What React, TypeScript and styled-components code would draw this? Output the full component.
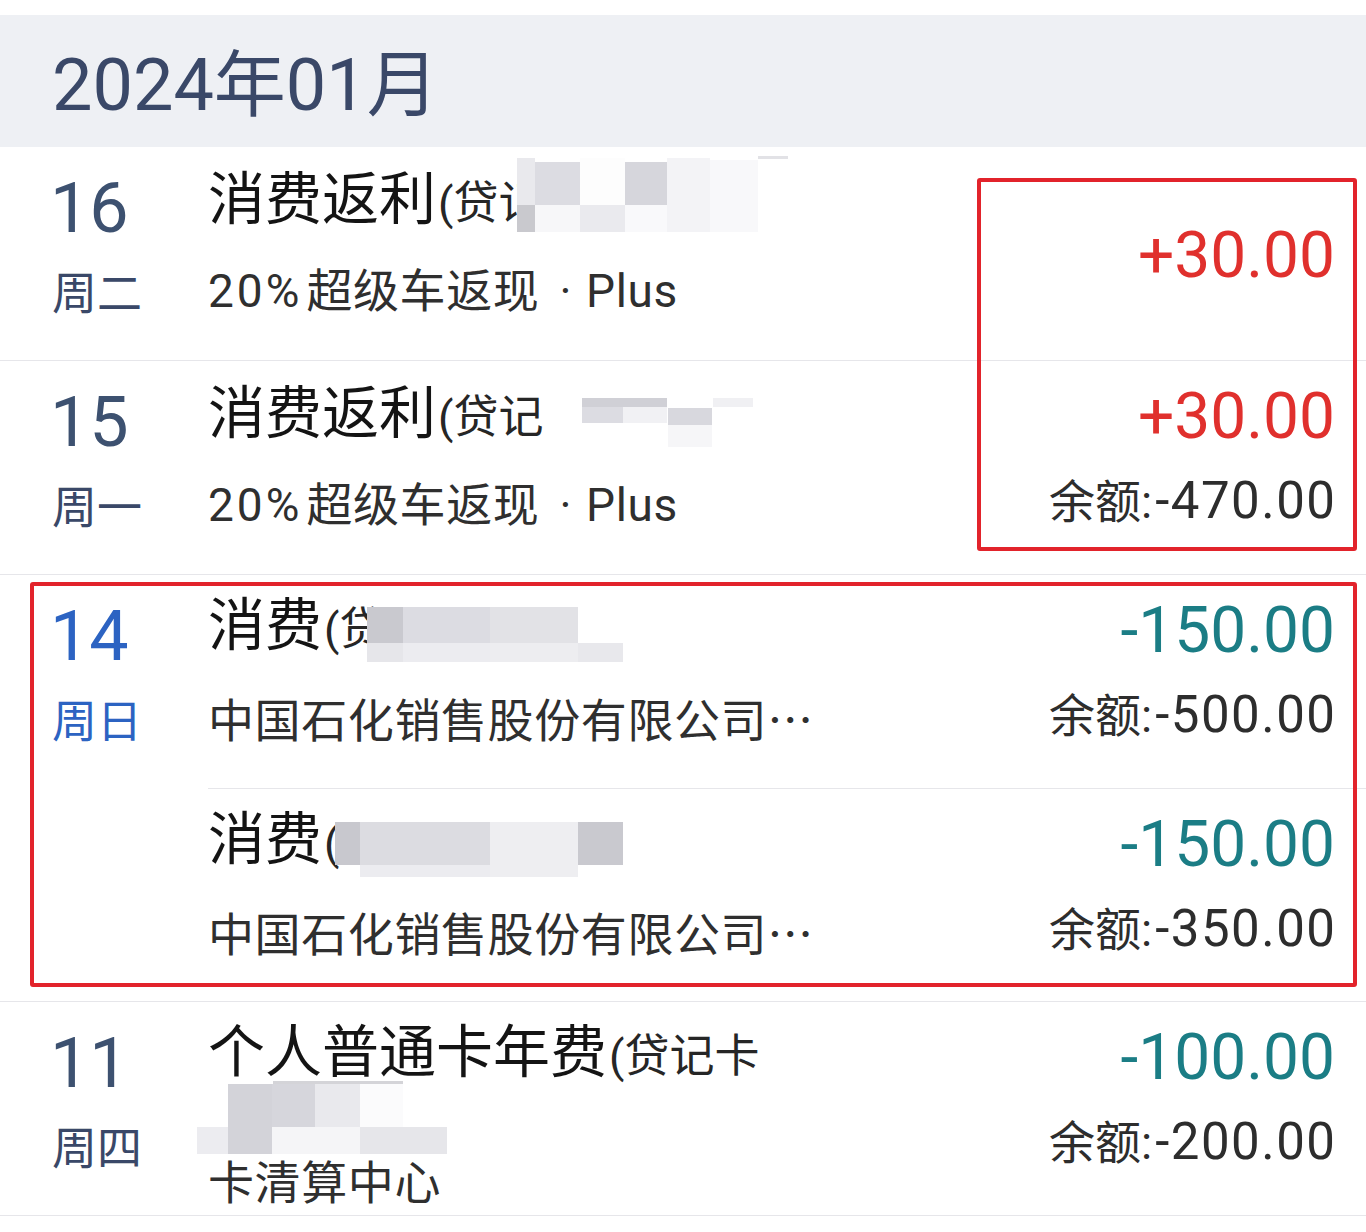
import React from "react";
import styled, { createGlobalStyle } from "styled-components";

const GlobalStyle = createGlobalStyle`
  html, body { margin: 0; padding: 0; background: #ffffff; }
  body {
    font-family: Roboto, "Noto Sans CJK SC", "Noto Sans", sans-serif;
    -webkit-font-smoothing: antialiased;
  }
  * { box-sizing: border-box; }
`;

const Page = styled.div`
  width: 1366px;
  padding-top: 15px;
  padding-bottom: 13px;
  background: #ffffff;
`;

const MonthHeader = styled.div`
  height: 132px;
  background: #eef0f4;
  display: flex;
  align-items: center;
  padding: 10px 0 0 52px;
  font-size: 72px;
  line-height: 72px;
  color: #3a4868;
`;

const List = styled.div`
  position: relative;
`;

const DayGroup = styled.div`
  display: flex;
  border-bottom: 1px solid #e6e6ea;
`;

const DateCol = styled.div<{ $active?: boolean }>`
  width: 208px;
  flex: none;
  padding: 25px 0 0 50px;
  display: flex;
  flex-direction: column;
  gap: 25px;
  color: ${(p) => (p.$active ? "#2c63c2" : "#3d5170")};
`;

const DayNum = styled.div`
  font-size: 70px;
  line-height: 72px;
`;

const Weekday = styled.div<{ $active?: boolean }>`
  font-size: 45px;
  line-height: 52px;
  padding-left: 2px;
  color: ${(p) => (p.$active ? "#2c63c2" : "#3a4868")};
`;

const Entries = styled.div`
  flex: 1;
  display: flex;
  flex-direction: column;
`;

const Entry = styled.div<{ $divider?: boolean }>`
  position: relative;
  height: 213px;
  display: flex;
  align-items: center;
  padding: 0 31px 20px 0;
  border-top: ${(p) => (p.$divider ? "1px solid #e6e6ea" : "none")};
`;

const Main = styled.div<{ $top?: number }>`
  flex: 1;
  display: flex;
  flex-direction: column;
  gap: 27px;
  ${(p) =>
    p.$top !== undefined
      ? `align-self: flex-start; margin-top: ${p.$top}px;`
      : ""}
`;

const Title = styled.div`
  font-size: 57px;
  line-height: 64px;
  color: #141414;
  white-space: nowrap;
`;

const TitleNote = styled.span`
  font-size: 45px;
  color: #262626;
  margin-left: 2px;
`;

const Sub = styled.div<{ $gapAbove?: number }>`
  font-size: 46px;
  line-height: 56px;
  color: #2f2f2f;
  white-space: nowrap;
  letter-spacing: 0.6px;
  ${(p) => (p.$gapAbove ? `margin-top: ${p.$gapAbove}px;` : "")}
`;

const Figures = styled.span`
  letter-spacing: 3px;
  margin-right: 4px;
`;

const Dot = styled.span`
  margin: 0 14px 0 20px;
`;

const Ellipsis = styled.span`
  font-family: "Noto Sans CJK SC", sans-serif;
`;

const Side = styled.div<{ $single?: boolean }>`
  display: flex;
  flex-direction: column;
  align-items: flex-end;
  gap: 24px;
  padding-top: ${(p) => (p.$single ? "25px" : "0")};
`;

const Amount = styled.div<{ $tone: "in" | "out" }>`
  font-size: 64px;
  line-height: 64px;
  color: ${(p) => (p.$tone === "in" ? "#e0302d" : "#1b7d85")};
  white-space: nowrap;
`;

const Balance = styled.div`
  font-size: 51px;
  line-height: 56px;
  color: #2d2d2d;
  white-space: nowrap;
  letter-spacing: 1.5px;
  margin-right: -1.5px;
`;

const BalanceLabel = styled.span`
  font-size: 46px;
  letter-spacing: 0;
  margin-right: 3px;
`;

const MosaicLayer = styled.div`
  position: absolute;
  inset: 0;
  pointer-events: none;
`;

const Cell = styled.div<{ $x: number; $y: number; $w: number; $h: number; $c: string }>`
  position: absolute;
  left: ${(p) => p.$x}px;
  top: ${(p) => p.$y}px;
  width: ${(p) => p.$w}px;
  height: ${(p) => p.$h}px;
  background: ${(p) => p.$c};
`;

const Annotation = styled.div<{ $x: number; $y: number; $w: number; $h: number }>`
  position: absolute;
  left: ${(p) => p.$x}px;
  top: ${(p) => p.$y}px;
  width: ${(p) => p.$w}px;
  height: ${(p) => p.$h}px;
  border: 4px solid #e2232b;
  border-radius: 3px;
  pointer-events: none;
`;

type C = [number, number, number, number, string];

const Mosaic = ({ cells }: { cells: C[] }) => (
  <MosaicLayer>
    {cells.map(([x, y, w, h, c], i) => (
      <Cell key={i} $x={x} $y={y} $w={w} $h={h} $c={c} />
    ))}
  </MosaicLayer>
);

const m16: C[] = [
  [309, 11, 18, 47, "#e9e9ed"],
  [309, 58, 18, 27, "#c9c9ce"],
  [327, 15, 45, 43, "#dcdce2"],
  [327, 58, 45, 27, "#f7f7f9"],
  [372, 11, 45, 47, "#fdfdfd"],
  [372, 58, 45, 27, "#eaeaee"],
  [417, 15, 42, 43, "#d6d6dc"],
  [417, 58, 42, 27, "#f9f9fb"],
  [459, 11, 43, 74, "#f3f3f6"],
  [502, 13, 48, 72, "#f8f8fa"],
  [550, 9, 30, 3, "#e2e2e6"],
];

const m15: C[] = [
  [374, 37, 85, 9, "#d0d0d6"],
  [374, 46, 41, 16, "#dcdce2"],
  [415, 46, 44, 16, "#f1f1f4"],
  [460, 47, 44, 17, "#d8d8de"],
  [460, 64, 44, 22, "#f6f6f8"],
  [505, 37, 40, 9, "#f0f0f3"],
];

const m14a: C[] = [
  [159, 32, 36, 36, "#c9c9cf"],
  [159, 68, 36, 19, "#e6e6ea"],
  [195, 32, 87, 36, "#dcdce2"],
  [195, 68, 87, 19, "#ececf0"],
  [282, 32, 88, 36, "#e2e2e6"],
  [282, 68, 88, 19, "#ededf0"],
  [370, 68, 45, 19, "#e8e8ec"],
];

const m14b: C[] = [
  [127, 33, 25, 43, "#c8c8ce"],
  [152, 33, 130, 43, "#dcdce1"],
  [152, 76, 130, 12, "#ececf0"],
  [282, 33, 88, 55, "#eeeef1"],
  [370, 33, 45, 43, "#c9c9cf"],
];

const m11: C[] = [
  [65, 79, 130, 3, "#d4d4d8"],
  [20, 82, 44, 43, "#d3d3d9"],
  [64, 82, 43, 43, "#d6d6dc"],
  [107, 82, 45, 43, "#e9e9ed"],
  [152, 82, 43, 43, "#fbfbfc"],
  [-11, 125, 31, 27, "#ececf0"],
  [20, 125, 44, 27, "#d3d3d9"],
  [64, 125, 88, 27, "#f5f5f7"],
  [152, 125, 87, 27, "#e6e6ea"],
];

const BalanceText = ({ value }: { value: string }) => (
  <Balance>
    <BalanceLabel>余额:</BalanceLabel>
    {value}
  </Balance>
);

export default function App() {
  return (
    <>
      <GlobalStyle />
      <Page>
        <MonthHeader>2024年01月</MonthHeader>
        <List>
          <DayGroup>
            <DateCol>
              <DayNum>16</DayNum>
              <Weekday>周二</Weekday>
            </DateCol>
            <Entries>
              <Entry>
                <Main>
                  <Title>
                    消费返利<TitleNote>(贷记</TitleNote>
                  </Title>
                  <Sub>
                    <Figures>20%</Figures>超级车返现<Dot>·</Dot>Plus
                  </Sub>
                </Main>
                <Side $single>
                  <Amount $tone="in">+30.00</Amount>
                </Side>
                <Mosaic cells={m16} />
              </Entry>
            </Entries>
          </DayGroup>

          <DayGroup>
            <DateCol>
              <DayNum>15</DayNum>
              <Weekday>周一</Weekday>
            </DateCol>
            <Entries>
              <Entry>
                <Main>
                  <Title>
                    消费返利<TitleNote>(贷记</TitleNote>
                  </Title>
                  <Sub>
                    <Figures>20%</Figures>超级车返现<Dot>·</Dot>Plus
                  </Sub>
                </Main>
                <Side>
                  <Amount $tone="in">+30.00</Amount>
                  <BalanceText value="-470.00" />
                </Side>
                <Mosaic cells={m15} />
              </Entry>
            </Entries>
          </DayGroup>

          <DayGroup>
            <DateCol $active>
              <DayNum>14</DayNum>
              <Weekday $active>周日</Weekday>
            </DateCol>
            <Entries>
              <Entry>
                <Main>
                  <Title>
                    消费<TitleNote>(贷</TitleNote>
                  </Title>
                  <Sub>
                    中国石化销售股份有限公司<Ellipsis>…</Ellipsis>
                  </Sub>
                </Main>
                <Side>
                  <Amount $tone="out">-150.00</Amount>
                  <BalanceText value="-500.00" />
                </Side>
                <Mosaic cells={m14a} />
              </Entry>
              <Entry $divider>
                <Main>
                  <Title>
                    消费<TitleNote>(</TitleNote>
                  </Title>
                  <Sub>
                    中国石化销售股份有限公司<Ellipsis>…</Ellipsis>
                  </Sub>
                </Main>
                <Side>
                  <Amount $tone="out">-150.00</Amount>
                  <BalanceText value="-350.00" />
                </Side>
                <Mosaic cells={m14b} />
              </Entry>
            </Entries>
          </DayGroup>

          <DayGroup>
            <DateCol>
              <DayNum>11</DayNum>
              <Weekday>周四</Weekday>
            </DateCol>
            <Entries>
              <Entry>
                <Main $top={19}>
                  <Title>
                    个人普通卡年费<TitleNote>(贷记卡</TitleNote>
                  </Title>
                  <Sub $gapAbove={39}>卡清算中心</Sub>
                </Main>
                <Side>
                  <Amount $tone="out">-100.00</Amount>
                  <BalanceText value="-200.00" />
                </Side>
                <Mosaic cells={m11} />
              </Entry>
            </Entries>
          </DayGroup>

          <Annotation $x={977} $y={31} $w={380} $h={373} />
          <Annotation $x={30} $y={435} $w={1327} $h={405} />
        </List>
      </Page>
    </>
  );
}
